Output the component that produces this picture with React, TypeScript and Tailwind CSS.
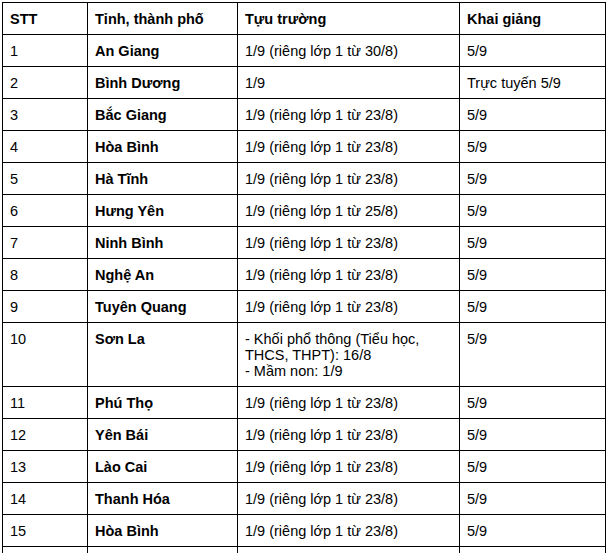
const ROWS: [string, string, string[], string][] = [
  ["1", "An Giang", ["1/9 (riêng lớp 1 từ 30/8)"], "5/9"],
  ["2", "Bình Dương", ["1/9"], "Trực tuyến 5/9"],
  ["3", "Bắc Giang", ["1/9 (riêng lớp 1 từ 23/8)"], "5/9"],
  ["4", "Hòa Bình", ["1/9 (riêng lớp 1 từ 23/8)"], "5/9"],
  ["5", "Hà Tĩnh", ["1/9 (riêng lớp 1 từ 23/8)"], "5/9"],
  ["6", "Hưng Yên", ["1/9 (riêng lớp 1 từ 25/8)"], "5/9"],
  ["7", "Ninh Bình", ["1/9 (riêng lớp 1 từ 23/8)"], "5/9"],
  ["8", "Nghệ An", ["1/9 (riêng lớp 1 từ 23/8)"], "5/9"],
  ["9", "Tuyên Quang", ["1/9 (riêng lớp 1 từ 23/8)"], "5/9"],
  ["10", "Sơn La", ["- Khối phổ thông (Tiểu học,", "THCS, THPT): 16/8", "- Mầm non: 1/9"], "5/9"],
  ["11", "Phú Thọ", ["1/9 (riêng lớp 1 từ 23/8)"], "5/9"],
  ["12", "Yên Bái", ["1/9 (riêng lớp 1 từ 23/8)"], "5/9"],
  ["13", "Lào Cai", ["1/9 (riêng lớp 1 từ 23/8)"], "5/9"],
  ["14", "Thanh Hóa", ["1/9 (riêng lớp 1 từ 23/8)"], "5/9"],
  ["15", "Hòa Bình", ["1/9 (riêng lớp 1 từ 23/8)"], "5/9"],
];

const cell = "border border-black pl-[7px] pr-2 pt-[8px] pb-[7px] align-top text-left";

export default function App() {
  return (
    <div
      className="h-[553px] overflow-hidden bg-white pt-[2px] pl-[2px] text-[14.5px] leading-[16px] text-black"
      style={{ fontFamily: '"Liberation Sans", Arial, sans-serif' }}
    >
      <table className="table-fixed border-collapse w-[603px]">
        <colgroup>
          <col className="w-[85px]" />
          <col className="w-[150px]" />
          <col className="w-[222px]" />
          <col className="w-[146px]" />
        </colgroup>
        <thead>
          <tr className="font-bold">
            <th className={cell}>STT</th>
            <th className={cell}>Tỉnh, thành phố</th>
            <th className={cell}>Tựu trường</th>
            <th className={cell}>Khai giảng</th>
          </tr>
        </thead>
        <tbody>
          {ROWS.map(([n, name, open, start]) => (
            <tr key={n}>
              <td className={cell}>{n}</td>
              <td className={cell + " font-bold"}>{name}</td>
              <td className={cell}>
                {open.map((l) => (
                  <div key={l}>{l}</div>
                ))}
              </td>
              <td className={cell}>{start}</td>
            </tr>
          ))}
          {/* next row continues below the fold */}
          <tr className="h-[32px]">
            <td className={cell} />
            <td className={cell} />
            <td className={cell} />
            <td className={cell} />
          </tr>
        </tbody>
      </table>
    </div>
  );
}
